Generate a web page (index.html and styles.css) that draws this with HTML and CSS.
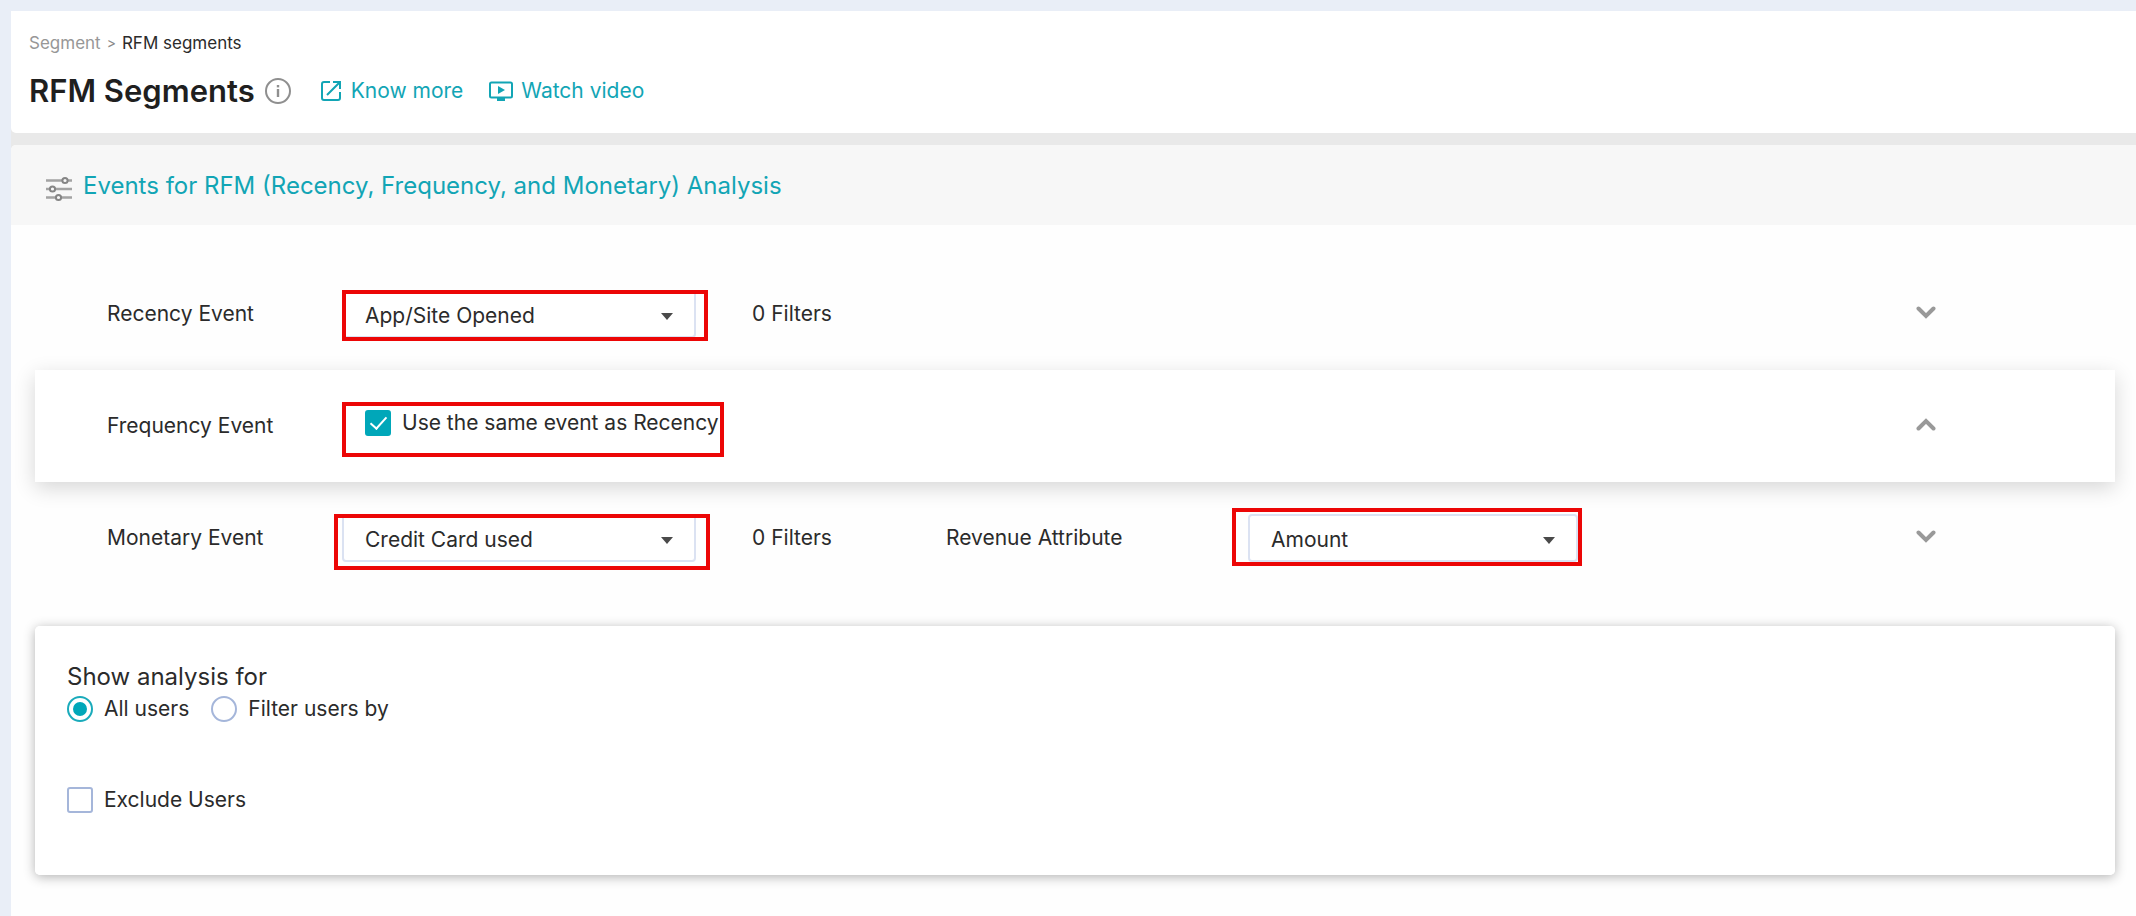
FILE: index.html
```html
<!DOCTYPE html>
<html lang="en">
<head>
<meta charset="utf-8">
<meta name="viewport" content="width=device-width, initial-scale=1">
<title>RFM Segments</title>
<link rel="stylesheet" href="styles.css">
</head>
<body>
<div class="page">
  <header class="page-header">
    <nav class="breadcrumb" aria-label="Breadcrumb">
      <a class="crumb" href="#segment">Segment</a>
      <span class="crumb-sep">&gt;</span>
      <span class="crumb-current">RFM segments</span>
    </nav>
    <div class="title-bar">
      <h1 class="title">RFM Segments</h1>
      <button class="icon-button" type="button" aria-label="Information">
        <svg width="26" height="26" viewBox="0 0 26 26" fill="none" stroke="#8f8f8f" stroke-width="2"><circle cx="13" cy="13" r="12"/><path d="M13 11v8" stroke-width="2.4"/><path d="M13 7v2.4" stroke-width="2.4"/></svg>
      </button>
      <a class="help-link help-first" href="#know-more">
        <svg width="20" height="20" viewBox="0 0 20 20" fill="none" stroke="#12a5b5" stroke-width="2"><path d="M9 1H3a2 2 0 0 0-2 2v14a2 2 0 0 0 2 2h14a2 2 0 0 0 2-2v-6"/><path d="M12 1h7v7M19 1L6 14"/></svg>
        <span>Know more</span>
      </a>
      <a class="help-link" href="#watch-video">
        <svg width="24" height="20" viewBox="0 0 24 20"><rect x="1" y="1.5" width="22" height="15" rx="1.5" fill="none" stroke="#12a5b5" stroke-width="2"/><path d="M8 17h8v3H8z" fill="#12a5b5"/><path d="M9 5l7 4-7 4z" fill="#12a5b5"/></svg>
        <span>Watch video</span>
      </a>
    </div>
  </header>

  <main class="content">
    <div class="section-head">
      <svg class="sliders" width="26" height="26" viewBox="0 0 26 26" fill="none" stroke="#a3a3a3"><path d="M0 4.500h26M0 13h26M0 21.500h26" stroke-width="2.600"/><g fill="#f7f7f7" stroke="#858585" stroke-width="2"><circle cx="19" cy="4.500" r="2.600"/><circle cx="6.500" cy="13" r="2.600"/><circle cx="12.500" cy="21.500" r="2.600"/></g></svg>
      <h2 class="section-title">Events for RFM (Recency, Frequency, and Monetary) Analysis</h2>
    </div>

    <div class="events">
      <div class="event-row">
        <label class="event-label" for="recency">Recency Event</label>
        <div class="control">
          <select class="select" id="recency"><option>App/Site Opened</option></select>
          <svg class="caret" width="12" height="7" viewBox="0 0 12 7"><path d="M0 0h12L6 7z" fill="#4a4a4a"/></svg>
          <span class="mark mark-recency"></span>
        </div>
        <span class="event-label">0 Filters</span>
        <button class="icon-button toggle" type="button" aria-label="Expand recency event">
          <svg width="20" height="14" viewBox="0 0 20 14" fill="none" stroke="#999" stroke-width="4" stroke-linecap="round"><path d="M2.500 2.500L10 10 17.500 2.500"/></svg>
        </button>
      </div>

      <div class="event-row event-open">
        <span class="event-label">Frequency Event</span>
        <div class="control control-check">
          <label class="choice"><input class="box" type="checkbox" checked>Use the same event as Recency</label>
          <span class="mark mark-frequency"></span>
        </div>
        <button class="icon-button toggle" type="button" aria-label="Collapse frequency event">
          <svg width="20" height="14" viewBox="0 0 20 14" fill="none" stroke="#999" stroke-width="4" stroke-linecap="round"><path d="M2.500 10.500L10 3 17.500 10.500"/></svg>
        </button>
      </div>

      <div class="event-row">
        <label class="event-label" for="monetary">Monetary Event</label>
        <div class="control">
          <select class="select" id="monetary"><option>Credit Card used</option></select>
          <svg class="caret" width="12" height="7" viewBox="0 0 12 7"><path d="M0 0h12L6 7z" fill="#4a4a4a"/></svg>
          <span class="mark mark-monetary"></span>
        </div>
        <span class="event-label">0 Filters</span>
        <label class="event-label" for="revenue">Revenue Attribute</label>
        <div class="control control-revenue">
          <select class="select" id="revenue"><option>Amount</option></select>
          <svg class="caret" width="12" height="7" viewBox="0 0 12 7"><path d="M0 0h12L6 7z" fill="#4a4a4a"/></svg>
          <span class="mark mark-revenue"></span>
        </div>
        <button class="icon-button toggle" type="button" aria-label="Expand monetary event">
          <svg width="20" height="14" viewBox="0 0 20 14" fill="none" stroke="#999" stroke-width="4" stroke-linecap="round"><path d="M2.500 2.500L10 10 17.500 2.500"/></svg>
        </button>
      </div>
    </div>

    <fieldset class="audience">
      <legend class="audience-title">Show analysis for</legend>
      <div class="radios">
        <label class="choice"><input class="radio" type="radio" name="audience" checked>All users</label>
        <label class="choice"><input class="radio" type="radio" name="audience">Filter users by</label>
      </div>
      <label class="choice"><input class="box" type="checkbox">Exclude Users</label>
    </fieldset>
  </main>
</div>
</body>
</html>
```
FILE: styles.css
```css
* {
  box-sizing: border-box;
}

body {
  margin: 0;
  background: #e9eef7;
  color: #2b2b2b;
  font-family: Inter, "Liberation Sans", sans-serif;
  font-size: 21px;
  line-height: 28px;
}

.page {
  display: flex;
  flex-direction: column;
  gap: 12px;
  min-height: 100vh;
  border-top: 11px solid #e9eef7;
  border-left: 11px solid #e9eef7;
  background: #e9e9e9;
}

.page-header {
  padding: 20px 18px;
  border-radius: 0 0 0 5px;
  background: #fff;
}

.breadcrumb {
  display: flex;
  align-items: center;
  gap: 6px;
  margin-bottom: 14px;
  font-size: 17px;
  line-height: 24px;
}

.crumb {
  color: #979797;
  text-decoration: none;
}

.crumb-sep {
  color: #8a8a8a;
  font-size: 14px;
}

.title-bar {
  display: flex;
  align-items: center;
}

.title {
  margin: 0 10px 0 0;
  color: #1f1f1f;
  font-size: 31px;
  font-weight: 600;
  line-height: 44px;
}

.icon-button {
  display: flex;
  padding: 0;
  border: 0;
  background: none;
}

.help-link {
  display: flex;
  align-items: center;
  gap: 8px;
  margin-left: 26px;
  color: #12a5b5;
  text-decoration: none;
}

.help-first {
  margin-left: 30px;
  gap: 10px;
}

.content {
  flex: 1;
  border-radius: 5px 0 0 0;
  background: #fefefe;
  overflow: hidden;
}

.section-head {
  display: flex;
  align-items: center;
  gap: 11px;
  padding: 20px 35px;
  background: #f7f7f7;
}

.sliders {
  margin-top: 8px;
}

.section-title {
  margin: 0;
  padding-top: 2px;
  color: #12a5b5;
  font-size: 24px;
  font-weight: 400;
  line-height: 38px;
}

.events {
  padding: 33px 21px 32px 24px;
}

.event-row {
  display: grid;
  grid-template-columns: 235px 410px 194px 302px 330px 1fr;
  align-items: center;
  min-height: 112px;
  padding: 0 179px 0 72px;
}

.event-open {
  position: relative;
  background: #fff;
  box-shadow: 0 6px 20px rgba(0, 0, 0, 0.16);
}

.control {
  position: relative;
  width: 354px;
}

.control-check {
  width: auto;
  padding: 0 0 6px 23px;
}

.control-revenue {
  width: 330px;
}

.select {
  display: block;
  width: 100%;
  height: 48px;
  padding: 4px 48px 0 21px;
  border: 2px solid #dbe2f2;
  border-radius: 4px;
  appearance: none;
  background: #fff;
  color: inherit;
  font: inherit;
}

.caret {
  position: absolute;
  top: 23px;
  right: 23px;
  pointer-events: none;
}

/* Red highlight frames over the controls */
.mark {
  position: absolute;
  border: 4px solid #ec0606;
  pointer-events: none;
}

.mark-recency {
  inset: 0 -12px -3px 0;
}

.mark-frequency {
  inset: -7px 28px -14px 0;
}

.mark-monetary {
  inset: 0 -14px -8px -8px;
}

.mark-revenue {
  inset: -6px -4px -4px -16px;
}

.toggle {
  grid-column: 6;
  justify-self: end;
  padding-bottom: 2px;
}

.choice {
  display: flex;
  align-items: center;
  gap: 11px;
  white-space: nowrap;
}

.box,
.radio {
  display: grid;
  flex: none;
  place-items: center;
  width: 26px;
  height: 26px;
  margin: 0;
  border: 2px solid #a5b6da;
  appearance: none;
  background: #fff;
}

.box {
  border-radius: 3px;
}

.radio {
  border-radius: 50%;
}

.box:checked {
  border-color: #00a7b9;
  background: #00a7b9;
}

.box:checked::after {
  width: 7px;
  height: 14px;
  margin-bottom: 4px;
  border: solid #fff;
  border-width: 0 2px 2px 0;
  content: "";
  transform: rotate(42deg);
}

.radio:checked {
  border-color: #1aabbb;
}

.radio:checked::after {
  width: 14px;
  height: 14px;
  border-radius: 50%;
  background: #00a7b9;
  content: "";
}

.audience {
  margin: 0 21px 41px 24px;
  padding: 33px 32px 61px;
  border: 0;
  border-radius: 5px;
  background: #fff;
  box-shadow: 0 2px 12px rgba(0, 0, 0, 0.3);
}

.audience-title {
  float: left;
  padding: 0;
  font-size: 24px;
  line-height: 36px;
}

.radios {
  display: flex;
  clear: both;
  gap: 22px;
  margin-bottom: 63px;
}
```
